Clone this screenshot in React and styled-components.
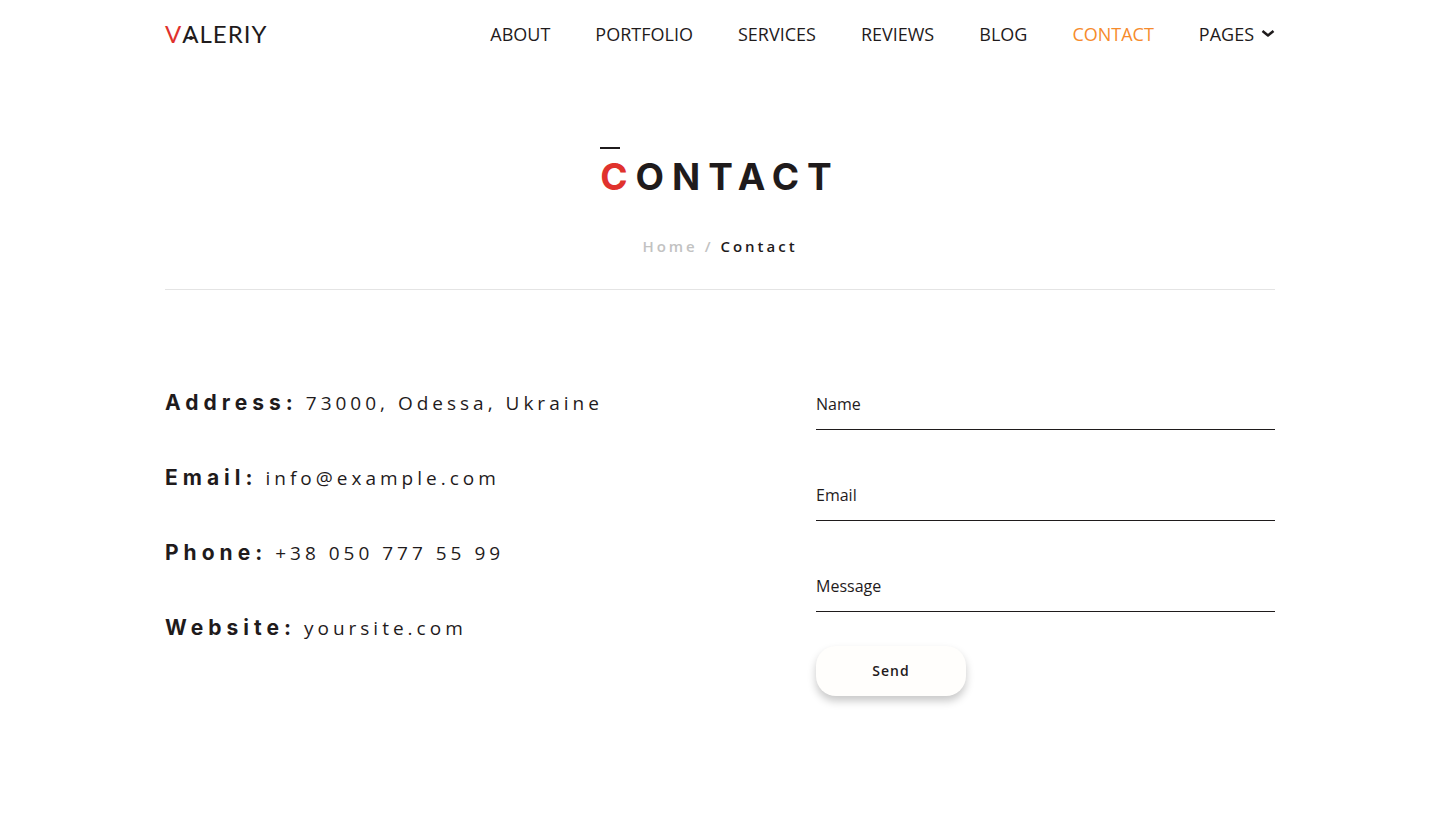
import React from "react";
import styled, { createGlobalStyle } from "styled-components";

const GlobalStyle = createGlobalStyle`
  *, *::before, *::after { box-sizing: border-box; }
  body {
    margin: 0;
    background: #fff;
    color: #1f1b1c;
    font-family: "Open Sans", sans-serif;
    font-size: 16px;
    line-height: 24px;
  }
`;

const Container = styled.div`
  max-width: 1140px;
  margin: 0 auto;
  padding: 0 15px;
`;

const Header = styled.header`
  display: flex;
  align-items: center;
  justify-content: space-between;
  height: 68px;
`;

const Logo = styled.a`
  color: inherit;
  font-family: Lato, sans-serif;
  font-size: 24px;
  font-kerning: none;
  line-height: 30px;
  letter-spacing: 1px;
  text-decoration: none;
`;

const Accent = styled.span`
  color: #e0322d;
`;

const DottedLetter = styled.span`
  position: relative;

  &::after {
    content: "";
    position: absolute;
    left: 50%;
    bottom: 8px;
    width: 4px;
    height: 4px;
    margin-left: -2px;
    border-radius: 50%;
    background: currentColor;
  }
`;

const Nav = styled.nav`
  display: flex;
  align-items: center;
  gap: 45px;
`;

const NavLink = styled.a`
  color: ${({ $active }) => ($active ? "#f68b2c" : "inherit")};
  font-size: 18px;
  line-height: 26px;
  text-decoration: none;
`;

const NavMenu = styled.button`
  display: flex;
  align-items: center;
  gap: 7px;
  padding: 0;
  border: 0;
  background: none;
  color: inherit;
  font: inherit;
  font-size: 18px;
  line-height: 26px;
  cursor: pointer;
`;

const Banner = styled.section`
  display: flex;
  flex-direction: column;
  align-items: center;
  padding: 79px 0 31px;
  border-bottom: 1px solid #e4e4e4;
`;

const Title = styled.h1`
  margin: 0;
  font-family: Inter, sans-serif;
  font-size: 37px;
  font-weight: 700;
  line-height: 56px;
  letter-spacing: 8px;

  &::before {
    content: "";
    display: block;
    width: 20px;
    height: 2px;
    background: currentColor;
  }
`;

const Breadcrumb = styled.nav`
  margin-top: 29px;
  font-size: 15px;
  font-weight: 600;
  line-height: 24px;
  letter-spacing: 3px;
`;

const Crumb = styled.a`
  color: #c2c2c2;
  text-decoration: none;
`;

const Content = styled.main`
  display: grid;
  grid-template-columns: 1fr 459px;
  gap: 30px;
  padding: 89px 0;
`;

const Details = styled.dl`
  display: flex;
  flex-direction: column;
  gap: 45px;
  margin: 9px 0 0;
`;

const Detail = styled.div`
  display: flex;
  align-items: baseline;
  gap: 8px;
  line-height: 30px;
`;

const Term = styled.dt`
  font-family: Inter, sans-serif;
  font-size: 21px;
  font-weight: 700;
  letter-spacing: 5px;
`;

const Value = styled.dd`
  margin: 0;
  font-size: 19px;
  letter-spacing: 4px;
`;

const Form = styled.form`
  display: flex;
  flex-direction: column;
  gap: 40px;
`;

const Field = styled.input`
  display: block;
  width: 100%;
  height: 51px;
  padding: 12px 0 13px;
  border: 0;
  border-bottom: 1px solid #1f1b1c;
  border-radius: 0;
  background: transparent;
  color: inherit;
  font: inherit;
  line-height: 24px;

  &::placeholder {
    color: #1f1b1c;
    opacity: 1;
  }
`;

const MessageField = styled(Field)`
  padding: 13px 0 12px;
  resize: none;
  overflow: hidden;
`;

const SendButton = styled.button`
  width: 150px;
  height: 50px;
  margin-top: -6px;
  border: 0;
  border-radius: 20px;
  background: #fffefc;
  box-shadow: 0 5px 8px rgba(0, 0, 0, 0.22);
  color: #1f1b1c;
  font: inherit;
  font-size: 14px;
  font-weight: 600;
  letter-spacing: 1px;
  cursor: pointer;
`;

const links = ["About", "Portfolio", "Services", "Reviews", "Blog", "Contact"];

const details = [
  ["Address:", "73000, Odessa, Ukraine"],
  ["Email:", "info@example.com"],
  ["Phone:", "+38 050 777 55 99"],
  ["Website:", "yoursite.com"],
];

function Chevron() {
  return (
    <svg width="14" height="14" viewBox="0 0 14 14" fill="none" aria-hidden="true">
      <path d="M1.500 4 7 8.500 12.500 4" stroke="currentColor" strokeWidth="2.500" strokeLinejoin="round" />
    </svg>
  );
}

export default function App() {
  return (
    <>
      <GlobalStyle />
      <Container>
        <Header>
          <Logo href="#">
            <Accent>V</Accent>
            <DottedLetter>A</DottedLetter>LERIY
          </Logo>
          <Nav>
            {links.map((name) => (
              <NavLink key={name} href={`#${name.toLowerCase()}`} $active={name === "Contact"}>
                {name.toUpperCase()}
              </NavLink>
            ))}
            <NavMenu type="button">
              PAGES
              <Chevron />
            </NavMenu>
          </Nav>
        </Header>
        <Banner>
          <Title>
            <Accent>C</Accent>ONTACT
          </Title>
          <Breadcrumb>
            <Crumb href="#">Home /</Crumb> Contact
          </Breadcrumb>
        </Banner>
        <Content>
          <Details>
            {details.map(([term, value]) => (
              <Detail key={term}>
                <Term>{term}</Term>
                <Value>{value}</Value>
              </Detail>
            ))}
          </Details>
          <Form>
            <Field type="text" placeholder="Name" aria-label="Name" />
            <Field type="email" placeholder="Email" aria-label="Email" />
            <MessageField as="textarea" rows={1} placeholder="Message" aria-label="Message" />
            <SendButton type="submit">Send</SendButton>
          </Form>
        </Content>
      </Container>
    </>
  );
}
